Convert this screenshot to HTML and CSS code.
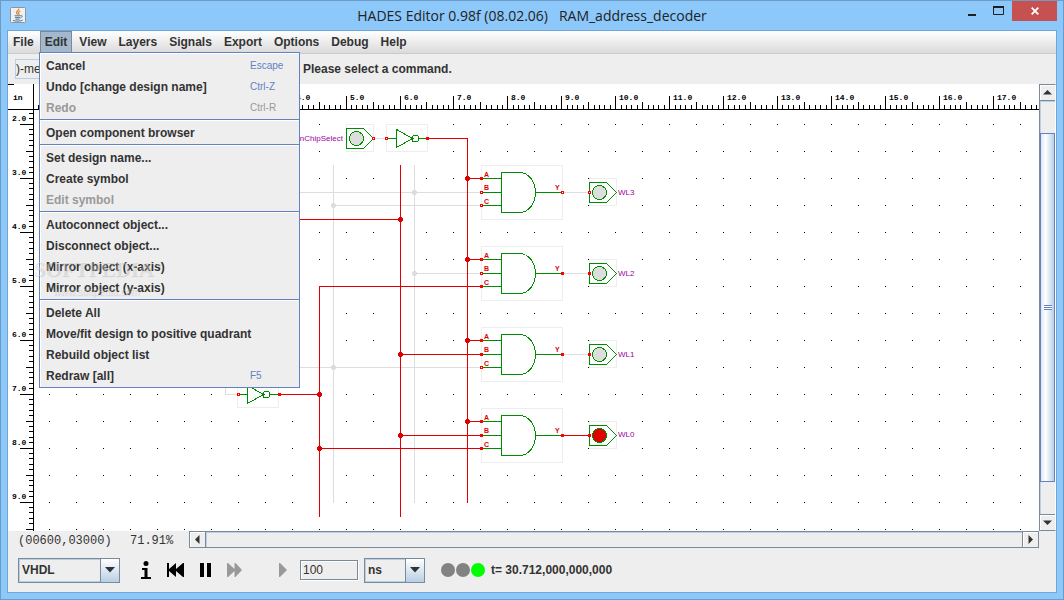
FILE: index.html
```html
<!DOCTYPE html>
<html lang="en">
<head>
<meta charset="utf-8">
<title>HADES Editor 0.98f (08.02.06) RAM_address_decoder</title>
<link rel="stylesheet" href="styles.css">
</head>
<body>
<div class="window">
  <header class="titlebar">
    <svg class="app-icon" viewBox="0 0 16 16" width="16" height="16" aria-hidden="true">
      <rect x=".5" y=".5" width="15" height="15" rx="1" fill="#eef0f1" stroke="#8c969e"/>
      <path d="M8.8 1.5c.6 2-3.2 2.700-2.200 4.600.3.6 1 .9 1.300 1.500M10.300 4c-1.600.8-2.300 1.500-1.600 2.400.4.6.2 1-.2 1.400" fill="none" stroke="#e8892c" stroke-width="1.300"/>
      <path d="M4.500 8.800h6M5 10.600h5M5.500 12.200h4M10.600 8.600c2.300-.6 1.900 1.700-.3 2.400M3 13.300c2 1.300 8 1 9.700-.2" fill="none" stroke="#4a7597" stroke-width="1"/>
    </svg>
    <h1 class="title">HADES Editor 0.98f (08.02.06)&nbsp;&nbsp; RAM_address_decoder</h1>
    <div class="window-buttons">
      <button class="win-btn" aria-label="Minimize"><svg width="10" height="10" viewBox="0 0 10 10"><path d="M1 9h8" stroke="#1f1f1f" stroke-width="2"/></svg></button>
      <button class="win-btn" aria-label="Maximize"><svg width="11" height="10" viewBox="0 0 11 10"><path d="M.5 1.500h10v7H.5z" fill="none" stroke="#1f1f1f" stroke-width="1"/><path d="M0 1h11" stroke="#1f1f1f" stroke-width="2"/></svg></button>
      <button class="win-btn close" aria-label="Close"><svg width="8" height="8" viewBox="0 0 8 8"><path d="M.7.7l6.600 6.600M7.300.7L.7 7.300" stroke="#fff" stroke-width="1.800"/></svg></button>
    </div>
  </header>

  <main class="client">
    <nav class="menubar">
      <button class="menu-title">File</button>
      <button class="menu-title open" aria-expanded="true">Edit</button>
      <button class="menu-title">View</button>
      <button class="menu-title">Layers</button>
      <button class="menu-title">Signals</button>
      <button class="menu-title">Export</button>
      <button class="menu-title">Options</button>
      <button class="menu-title">Debug</button>
      <button class="menu-title">Help</button>
      <div class="menu" role="menu">
        <button class="item" role="menuitem">Cancel<kbd>Escape</kbd></button>
        <button class="item" role="menuitem">Undo [change design name]<kbd>Ctrl-Z</kbd></button>
        <button class="item" role="menuitem" disabled>Redo<kbd>Ctrl-R</kbd></button>
        <hr class="sep">
        <button class="item" role="menuitem">Open component browser</button>
        <hr class="sep">
        <button class="item" role="menuitem">Set design name...</button>
        <button class="item" role="menuitem">Create symbol</button>
        <button class="item" role="menuitem" disabled>Edit symbol</button>
        <hr class="sep">
        <button class="item" role="menuitem">Autoconnect object...</button>
        <button class="item" role="menuitem">Disconnect object...</button>
        <button class="item" role="menuitem">Mirror object (x-axis)</button>
        <button class="item" role="menuitem">Mirror object (y-axis)</button>
        <hr class="sep">
        <button class="item" role="menuitem">Delete All</button>
        <button class="item" role="menuitem">Move/fit design to positive quadrant</button>
        <button class="item" role="menuitem">Rebuild object list</button>
        <button class="item" role="menuitem">Redraw [all]<kbd>F5</kbd></button>
      </div>
      <div class="watermark"><span class="brand">SOFTPEDIA<sup>™</sup></span><span class="site">www.softpedia.com</span></div>
    </nav>

    <div class="message-bar">
      <input class="mode" aria-label="Mode" value=")-me" readonly>
      <output class="message">Please select a command.</output>
    </div>

    <div class="editor">
      <svg class="canvas" id="canvas" role="img" aria-label="Circuit schematic">
        <defs>
          <g id="and">
            <rect x="481.500" y="165.500" width="81" height="54" class="bbox"/>
            <path class="green" d="M482 178.500h19M482 192.500h19M482 205.500h19M535 192.500h27M501.500 172.500h18c9 0 16 9 16 20s-7 20-16 20h-18z"/>
            <g class="pin"><text x="484" y="177">A</text><text x="484" y="190">B</text><text x="484" y="204">C</text><text x="555" y="190">Y</text></g>
          </g>
          <g id="port">
            <rect x="589.500" y="178.500" width="27" height="27" class="bbox"/>
            <path class="green" d="M589.500 182.500h17l10 10-10 10h-17z"/>
          </g>
          <g id="inv">
            <rect x="386.500" y="124.500" width="41" height="27" class="bbox"/>
            <path class="green" d="M388 138.500h8M396.500 129.500l16 9-16 9zM419 138.500h8"/>
            <circle class="green" cx="415.500" cy="138.500" r="3.500"/>
          </g>
          <rect id="open" x="-1" y="-1" width="2" height="2" fill="#fff" stroke="#f00"/>
          <path id="full" d="M-1.500-1.500h3v3h-3z" fill="#f00"/>
          <path id="node" d="M-1-2.500h2l1.500 1.500v2l-1.500 1.500h-2l-1.500-1.500v-2z"/>
        </defs>
        <path class="tick" id="dots"/>
        <g transform="translate(-8 -84)" shape-rendering="crispEdges">
          <use href="#and"/><use href="#and" y="81"/><use href="#and" y="162"/><use href="#and" y="243"/>
          <use href="#port"/><use href="#port" y="81"/><use href="#port" y="162"/><use href="#port" y="243"/>
          <rect x="346.500" y="124.500" width="27" height="27" class="bbox"/>
          <path class="green" d="M346.500 128.500h17l10 10-10 10h-17z"/>
          <use href="#inv"/><use href="#inv" x="-149" y="256"/>
          <g class="lamp">
            <circle cx="356.500" cy="138.500" r="7"/><circle cx="599.500" cy="192.500" r="7"/><circle cx="599.500" cy="273.500" r="7"/><circle cx="599.500" cy="354.500" r="7"/><circle class="lit" cx="599.500" cy="435.500" r="7"/>
          </g>
          <path class="low" d="M333.500 165v338M414.500 165v338M299 192.500h182M333 205.500h148M414 273.500h67M299 367.500h182M375 138.500h11M563 192.500h26M563 273.500h26M563 354.500h26M225.500 380v14.500h13"/>
          <g fill="#ddd"><use href="#node" x="414.500" y="192.500"/><use href="#node" x="333.500" y="205.500"/><use href="#node" x="414.500" y="273.500"/><use href="#node" x="333.500" y="367.500"/></g>
          <path class="high" d="M428 138.500h39.500V503M400.500 165v352M319.500 517V286.500H481M299 219.500h102M467 178.500h14M467 259.500h14M467 340.500h14M467 421.500h14M400 354.500h81M400 435.500h81M319 448.500h162M280 394.500h40M563 435.500h26"/>
          <g fill="#e00000"><use href="#node" x="467.500" y="178.500"/><use href="#node" x="467.500" y="259.500"/><use href="#node" x="467.500" y="340.500"/><use href="#node" x="467.500" y="421.500"/><use href="#node" x="400.500" y="219.500"/><use href="#node" x="400.500" y="354.500"/><use href="#node" x="400.500" y="435.500"/><use href="#node" x="319.500" y="394.500"/><use href="#node" x="319.500" y="448.500"/></g>
          <use href="#open" x="373.500" y="138.500"/><use href="#open" x="386.500" y="138.500"/><use href="#full" x="427.500" y="138.500"/>
          <use href="#full" x="481.500" y="178.500"/><use href="#open" x="481.500" y="192.500"/><use href="#open" x="481.500" y="205.500"/><use href="#open" x="562.500" y="192.500"/><use href="#open" x="589.500" y="192.500"/>
          <use href="#full" x="481.500" y="259.500"/><use href="#open" x="481.500" y="273.500"/><use href="#full" x="481.500" y="286.500"/><use href="#full" x="562.500" y="273.500"/><use href="#full" x="589.500" y="273.500"/>
          <use href="#full" x="481.500" y="340.500"/><use href="#full" x="481.500" y="354.500"/><use href="#open" x="481.500" y="367.500"/><use href="#full" x="562.500" y="354.500"/><use href="#full" x="589.500" y="354.500"/>
          <use href="#full" x="481.500" y="421.500"/><use href="#full" x="481.500" y="435.500"/><use href="#full" x="481.500" y="448.500"/><use href="#full" x="562.500" y="435.500"/><use href="#full" x="589.500" y="435.500"/>
          <use href="#open" x="238.500" y="394.500"/><use href="#full" x="279.500" y="394.500"/>
          <g class="net"><text x="343" y="141" text-anchor="end">nChipSelect</text><text x="618" y="195">WL3</text><text x="618" y="276">WL2</text><text x="618" y="357">WL1</text><text x="618" y="437">WL0</text></g>
        </g>
        <path class="tick" id="ruler"/>
        <g class="scale" id="scale"><text x="5" y="16">in</text></g>
      </svg>
      <div class="vscroll">
        <button class="arrow" aria-label="Scroll up"><svg width="9" height="5" viewBox="0 0 9 5"><path d="M4.500 0L9 4.500H0z"/></svg></button>
        <div class="track"><div class="thumb"><i class="grip"></i></div></div>
        <button class="arrow" aria-label="Scroll down"><svg width="9" height="5" viewBox="0 0 9 5"><path d="M4.500 5L9 .5H0z"/></svg></button>
      </div>
    </div>

    <div class="status">
      <output class="coords">(00600,03000)</output>
      <output class="zoom">71.91%</output>
      <div class="hscroll">
        <button class="arrow" aria-label="Scroll left"><svg width="5" height="9" viewBox="0 0 5 9"><path d="M0 4.500L4.500 0v9z"/></svg></button>
        <div class="track"></div>
        <button class="arrow" aria-label="Scroll right"><svg width="5" height="9" viewBox="0 0 5 9"><path d="M5 4.500L.5 0v9z"/></svg></button>
      </div>
    </div>

    <footer class="controls">
      <div class="combo language">
        <select aria-label="Language"><option>VHDL</option></select>
        <span class="drop"><svg width="10" height="6" viewBox="0 0 10 6"><path d="M0 0h10L5 5.500z" fill="#333"/></svg></span>
      </div>
      <div class="transport">
        <button class="tool" aria-label="Info"><svg width="10" height="18" viewBox="0 0 10 18"><circle cx="5" cy="2.500" r="2.500"/><path d="M1 7h5.500v9H10v2H0v-2h3.500V9H1z"/></svg></button>
        <button class="tool" aria-label="Rewind"><svg width="17" height="14" viewBox="0 0 17 14"><path d="M0 0h2v6l7-6v6l7-6h1v14h-1L9 8v6L2 8v6H0z"/></svg></button>
        <button class="tool" aria-label="Pause"><svg width="11" height="14" viewBox="0 0 11 14"><path d="M0 0h4v14H0zM7 0h4v14H7z"/></svg></button>
        <button class="tool" aria-label="Fast forward" disabled><svg width="15" height="14" viewBox="0 0 15 14"><path d="M0 0h1l6.500 6V0h1L15 7l-6.500 7h-1V8L1 14H0z"/></svg></button>
        <button class="tool step" aria-label="Step" disabled><svg width="8" height="14" viewBox="0 0 8 14"><path d="M0 0h1l7 7-7 7H0z"/></svg></button>
      </div>
      <input class="duration" aria-label="Duration" value="100">
      <div class="combo unit">
        <select aria-label="Time unit"><option>ns</option></select>
        <span class="drop"><svg width="10" height="6" viewBox="0 0 10 6"><path d="M0 0h10L5 5.500z" fill="#333"/></svg></span>
      </div>
      <svg class="lights" width="45" height="14" viewBox="0 0 45 14" aria-hidden="true"><circle cx="7" cy="7" r="7" fill="#828282"/><circle cx="22" cy="7" r="7" fill="#828282"/><circle cx="37" cy="7" r="7" fill="#0f0"/></svg>
      <output class="time">t= 30.712,000,000,000</output>
    </footer>
  </main>
</div>
<script src="ruler.js"></script>
</body>
</html>
```
FILE: styles.css
```css
* { box-sizing: border-box; }
body {
  margin: 0;
  font: bold 12px/16px "Liberation Sans", Arial, sans-serif;
  color: #333;
}
button, input, select { font: inherit; color: inherit; margin: 0; padding: 0; border: 0; border-radius: 0; background: none; }
svg { display: block; }

.window {
  display: flex;
  flex-direction: column;
  height: 100vh;
  padding: 0 6px 6px;
  border: 1px solid #6c9bc6;
  background: #8dc8fb;
}
.titlebar {
  display: grid;
  grid-template-columns: 1fr auto 1fr;
  height: 29px;
  flex: none;
}
.app-icon { margin: 6px 0 0 3px; }
.title {
  margin: 0;
  font: 14px/29px "Open Sans", "Noto Sans", sans-serif;
  color: #222;
  white-space: nowrap;
}
.window-buttons { display: flex; justify-content: flex-end; align-items: flex-start; }
.win-btn { display: flex; align-items: center; justify-content: center; width: 27px; height: 20px; }
.win-btn.close { width: 45px; background: #c75050; }

.client {
  flex: 1;
  min-height: 0;
  display: flex;
  flex-direction: column;
  border: 1px solid #72a5d6;
  background: #eee;
}

.menubar {
  position: relative;
  flex: none;
  display: flex;
  gap: 2px;
  height: 23px;
  padding-bottom: 1px;
  border-bottom: 1px solid #ccc;
  background: linear-gradient(#fff, #dadada);
}
.menu-title { padding: 0 5px; height: 21px; }
.menu-title:first-child { margin-right: -1px; }
.menu-title.open { background: #a3b8cc; border: solid #7a8a99; border-width: 1px 1px 0; padding: 0 4px; }
.menu {
  position: absolute;
  z-index: 2;
  left: 31px;
  top: 21px;
  width: 261px;
  padding: 2px 0 1px;
  border: 1px solid #6382bf;
  background: #eee;
  box-shadow: inset 1px 1px #fff;
}
.item {
  display: flex;
  justify-content: space-between;
  align-items: center;
  width: 100%;
  height: 21px;
  padding-left: 6px;
  text-align: left;
  white-space: nowrap;
}
.item:disabled { color: #999; }
.item kbd { width: 49px; font: 10px/16px "Liberation Sans", Arial, sans-serif; color: #6382bf; }
.item:disabled kbd { color: #999; }
.sep { height: 2px; margin: 1px 0; border: 0; border-top: 1px solid #6382bf; background: #fff; }
.watermark {
  position: absolute;
  z-index: 3;
  left: 25px;
  top: 227px;
  display: grid;
  gap: 6px;
  pointer-events: none;
  color: rgba(255, 255, 255, .3);
  text-shadow: 1px 1px 1px rgba(120, 120, 120, .25);
}
.brand { font: bold 21px/22px "Liberation Serif", serif; }
.brand sup { font-size: 8px; line-height: 8px; }
.site { padding-left: 20px; font: 10px/12px "Liberation Sans", sans-serif; }

.message-bar { flex: none; display: flex; align-items: center; gap: 10px; height: 30px; padding-left: 7px; }
.mode { width: 278px; height: 20px; border: 1px solid #b8cfe5; font-weight: normal; }

.editor { flex: 1; min-height: 0; display: grid; grid-template-columns: 1fr 17px; }
.canvas { width: 100%; height: 100%; background: #fff; overflow: hidden; }
.tick { fill: #000; }
.scale { font: bold 8px "Liberation Mono", monospace; fill: #000; }
.bbox { fill: #fff; stroke: #eee; }
.green { fill: none; stroke: #008c00; }
.pin { font: bold 7px "Liberation Sans", sans-serif; fill: #e00000; }
.low { fill: none; stroke: #ddd; }
.high { fill: none; stroke: #e00000; }
.lamp { fill: #ddd; stroke: #008c00; }
.lit { fill: #e00000; }
.net { font: 8px "Liberation Sans", sans-serif; fill: #a000a0; }

.vscroll { display: flex; flex-direction: column; border: 1px solid #7a8a99; border-right-color: #fff; }
.hscroll { flex: 1; display: flex; border: 1px solid #7a8a99; }
.arrow {
  flex: none;
  display: flex;
  align-items: center;
  justify-content: center;
  width: 15px;
  height: 15px;
  fill: #333;
  box-shadow: inset 1px 1px #fff;
}
.track { flex: 1; border: solid #7a8a99; box-shadow: inset 1px 1px #b8cfe5; }
.vscroll .track { display: flex; flex-direction: column; padding: 32px 0; border-width: 1px 0; }
.hscroll .track { border-width: 0 1px; }
.thumb {
  flex: 1;
  display: flex;
  align-items: center;
  justify-content: center;
  border: 1px solid #6382bf;
  background: linear-gradient(90deg, #dbe7f3, #fff 35%, #b8cfe5);
}
.grip { width: 8px; height: 5px; background: repeating-linear-gradient(#6382bf 0 1px, #fff 1px 2px); }

.status { flex: none; display: flex; align-items: center; height: 17px; padding: 0 17px 0 10px; font: 12px/16px "Liberation Mono", monospace; }
.status .hscroll { height: 17px; }
.coords, .zoom { padding-top: 3px; }
.coords { width: 112px; }
.zoom { width: 59px; }

.controls { flex: none; display: flex; align-items: center; height: 44px; padding: 0 10px; }
.combo { position: relative; height: 25px; border: 1px solid #7a8a99; }
.combo select { appearance: none; width: 100%; height: 100%; padding-left: 2px; border: 1px solid #b8cfe5; }
.language { width: 102px; }
.unit { width: 61px; }
.drop {
  position: absolute;
  inset: 0 0 0 auto;
  width: 19px;
  display: flex;
  align-items: center;
  justify-content: center;
  border-left: 1px solid #7a8a99;
  background: linear-gradient(#fff, #b8cfe5);
  pointer-events: none;
}
.transport { display: flex; align-items: center; gap: 16px; margin: 0 13px 0 21px; }
.tool { fill: #000; }
.tool:disabled { fill: #999; }
.tool.step { margin-left: 21px; }
.duration { width: 58px; height: 20px; margin-right: 6px; padding-left: 2px; border: 1px solid #7a8a99; box-shadow: 1px 1px #fff, inset 1px 1px #fff; font-weight: normal; }
.lights { margin: 0 5px 0 16px; }
```
FILE: ruler.js
```js
// Draws the inch rulers and the half-inch snap grid for the current canvas size.
const PITCH = 54;
const X0 = 338 - 5 * PITCH;
const Y0 = 40 - 2 * PITCH;
const RULER_X = 25;
const RULER_Y = 25;
const canvas = document.getElementById('canvas');
const scale = document.getElementById('scale');
const SVG_NS = 'http://www.w3.org/2000/svg';

function label(text, x, y) {
  const node = document.createElementNS(SVG_NS, 'text');
  node.textContent = text;
  node.setAttribute('x', x);
  node.setAttribute('y', y);
  node.classList.add('inch');
  scale.appendChild(node);
}

function draw() {
  const width = canvas.clientWidth;
  const height = canvas.clientHeight;
  scale.querySelectorAll('.inch').forEach(node => node.remove());
  let ruler = `M0 ${RULER_Y}H${width}v1H0zM${RULER_X} 0h1V${height}h-1zM0 0h6v1H0z`;
  let dots = '';
  const length = k => (k % 10 === 0 ? 13 : k % 5 === 0 ? 7 : 4);

  for (let k = -10; ; k++) {
    const x = Math.floor(X0 + k * PITCH / 10 - k / 150 + 0.4);
    if (x > width) break;
    if (x < RULER_X + 4) continue;
    const n = length(k);
    ruler += `M${x} ${RULER_Y - n}h1v${n}h-1z`;
    if (n === 13) label((k / 10).toFixed(1), x + 4, 16);
  }
  for (let k = -10; ; k++) {
    const y = Math.floor(Y0 + k * PITCH / 10 + 0.01);
    if (y > height) break;
    if (y < RULER_Y + 3) continue;
    const n = length(k);
    ruler += `M${RULER_X - n} ${y}h${n}v1h-${n}z`;
    if (n === 13) label((k / 10).toFixed(1), 4, y - 3);
    if (n > 4) {
      for (let j = -10; ; j++) {
        const x = Math.floor(X0 + j * PITCH / 2 - j / 30 + 0.4);
        if (x > width) break;
        if (x > RULER_X) dots += `M${x} ${y}h1v1h-1z`;
      }
    }
  }
  document.getElementById('ruler').setAttribute('d', ruler);
  document.getElementById('dots').setAttribute('d', dots);
}

draw();
addEventListener('resize', draw);
```
